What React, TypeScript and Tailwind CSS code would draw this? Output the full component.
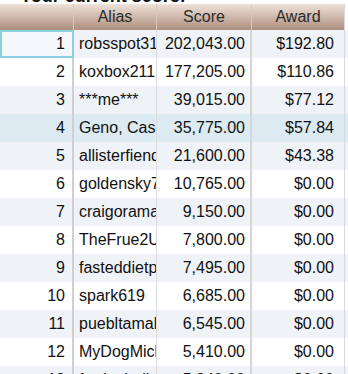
import React from 'react';

interface Row {
  rank: number;
  alias: string;
  score: string;
  award: string;
}

const ROWS: Row[] = [
  { rank: 1, alias: 'robsspot31', score: '202,043.00', award: '$192.80' },
  { rank: 2, alias: 'koxbox211', score: '177,205.00', award: '$110.86' },
  { rank: 3, alias: '***me***', score: '39,015.00', award: '$77.12' },
  { rank: 4, alias: 'Geno, Casey', score: '35,775.00', award: '$57.84' },
  { rank: 5, alias: 'allisterfiend', score: '21,600.00', award: '$43.38' },
  { rank: 6, alias: 'goldensky7', score: '10,765.00', award: '$0.00' },
  { rank: 7, alias: 'craigorama', score: '9,150.00', award: '$0.00' },
  { rank: 8, alias: 'TheFrue2U', score: '7,800.00', award: '$0.00' },
  { rank: 9, alias: 'fasteddietp', score: '7,495.00', award: '$0.00' },
  { rank: 10, alias: 'spark619', score: '6,685.00', award: '$0.00' },
  { rank: 11, alias: 'puebltamale', score: '6,545.00', award: '$0.00' },
  { rank: 12, alias: 'MyDogMickey', score: '5,410.00', award: '$0.00' },
  { rank: 13, alias: 'fordenbuilt', score: '5,340.00', award: '$0.00' },
];

const App: React.FC = () => {
  return (
    <div
      className="w-[348px] h-[374px] overflow-hidden bg-white text-[#111]"
      style={{ fontFamily: '"Liberation Sans", Arial, sans-serif' }}
    >
      {/* Title, scrolled mostly out of view */}
      <div className="h-[4px] overflow-hidden flex items-end">
        <div className="pl-[20px] text-[18px] font-bold leading-[18px] -mb-[1px] whitespace-nowrap">Your current score:</div>
      </div>

      {/* Header */}
      <div className="flex h-[26px] bg-gradient-to-b from-[#efe2da] to-[#ad8f7f] text-[#2a2a2a] text-[16px]">
        <div className="w-[74px] shrink-0 border-r border-[#d9c9bf]" />
        <div className="w-[83px] shrink-0 border-r border-[#d9c9bf] flex items-center justify-center">Alias</div>
        <div className="w-[95px] shrink-0 border-r border-[#d9c9bf] flex items-center justify-center">Score</div>
        <div className="w-[92px] shrink-0 flex items-center justify-center">Award</div>
        <div className="flex-1 bg-white border-l border-[#d8d8d8]" />
      </div>

      {/* Rows */}
      {ROWS.map((r) => {
        const bg = r.rank === 4 ? 'bg-[#dcebf1]' : r.rank % 2 === 1 ? 'bg-[#eff3f8]' : 'bg-white';
        return (
          <div key={r.rank} className={`flex h-[28px] text-[16px] ${bg}`}>
            <div
              className={`w-[74px] shrink-0 flex items-center justify-end pr-[7px] border-r-2 border-[#cfcfcf] ${
                r.rank === 1 ? 'bg-[#f5f8fb] border-l-2 border-t-2 border-b-2 border-l-[#8ccfdf] border-t-[#8ccfdf] border-b-[#8ccfdf] border-r-[#8ccfdf]' : ''
              }`}
            >
              {r.rank}
            </div>
            <div className="w-[83px] shrink-0 flex items-center pl-[5px] overflow-hidden whitespace-nowrap border-r border-[#dcdcdc]">
              {r.alias}
            </div>
            <div className="w-[95px] shrink-0 flex items-center justify-end pr-[5px] border-r-2 border-[#d6d6d6]">
              {r.score}
            </div>
            <div className="w-[92px] shrink-0 flex items-center justify-end pr-[10px]">{r.award}</div>
            <div className="flex-1 border-l border-[#d8d8d8]" />
          </div>
        );
      })}
    </div>
  );
};

export default App;
